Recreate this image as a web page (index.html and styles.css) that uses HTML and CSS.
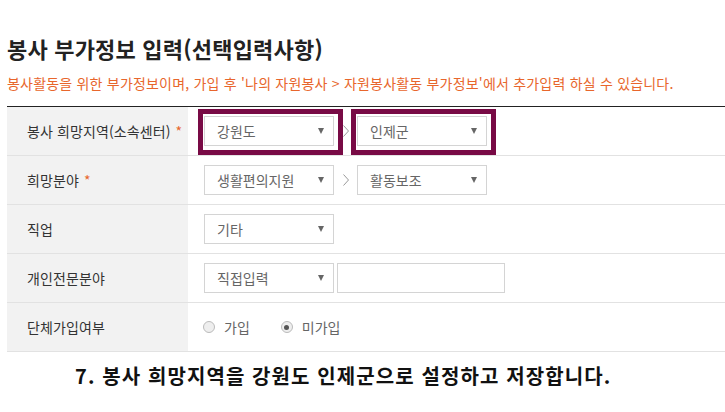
FILE: index.html
```html
<!DOCTYPE html>
<html lang="ko">
<head>
<meta charset="utf-8">
<link rel="stylesheet" href="styles.css">
</head>
<body>
<div class="page">
  <h1 class="title">봉사 부가정보 입력(선택입력사항)</h1>
  <p class="notice">봉사활동을 위한 부가정보이며, 가입 후 '나의 자원봉사 &gt; 자원봉사활동 부가정보'에서 추가입력 하실 수 있습니다.</p>
  <div class="form">
    <div class="row">
      <div class="label">봉사 희망지역(소속센터) <span class="req">*</span></div>
      <div class="field">
        <div class="select"><span class="val">강원도</span><span class="arrow"></span><span class="box"></span></div>
        <span class="sep"><svg width="6" height="12" viewBox="0 0 6 12"><polyline points="0.5,0.5 5.5,6 0.5,11.5" fill="none" stroke="#999" stroke-width="1"/></svg></span>
        <div class="select"><span class="val">인제군</span><span class="arrow"></span><span class="box"></span></div>
      </div>
    </div>
    <div class="row">
      <div class="label">희망분야 <span class="req">*</span></div>
      <div class="field">
        <div class="select"><span class="val">생활편의지원</span><span class="arrow"></span></div>
        <span class="sep"><svg width="6" height="12" viewBox="0 0 6 12"><polyline points="0.5,0.5 5.5,6 0.5,11.5" fill="none" stroke="#999" stroke-width="1"/></svg></span>
        <div class="select"><span class="val">활동보조</span><span class="arrow"></span></div>
      </div>
    </div>
    <div class="row">
      <div class="label">직업</div>
      <div class="field">
        <div class="select"><span class="val">기타</span><span class="arrow"></span></div>
      </div>
    </div>
    <div class="row">
      <div class="label">개인전문분야</div>
      <div class="field">
        <div class="select"><span class="val">직접입력</span><span class="arrow"></span></div>
        <div class="input"></div>
      </div>
    </div>
    <div class="row">
      <div class="label">단체가입여부</div>
      <div class="field radios">
        <label class="radio"><span class="dot"></span>가입</label>
        <label class="radio"><span class="dot on"></span>미가입</label>
      </div>
    </div>
  </div>
  <p class="caption">7. 봉사 희망지역을 강원도 인제군으로 설정하고 저장합니다.</p>
</div>
</body>
</html>
```
FILE: styles.css
```css
html, body {
  margin: 0;
  padding: 0;
  background: #fff;
}
body {
  font-family: "Noto Sans CJK KR", "Noto Sans", sans-serif;
  width: 725px;
  height: 412px;
  overflow: hidden;
}
.page {
  padding-left: 7px;
}
.title {
  margin: 35px 0 0;
  font-size: 22px;
  line-height: 26px;
  font-weight: 700;
  color: #222;
  letter-spacing: 0.2px;
}
.notice {
  margin: 13px 0 0;
  font-size: 14px;
  line-height: 18px;
  color: #e8662c;
  letter-spacing: 0.2px;
  white-space: nowrap;
}
.form {
  margin-top: 14px;
  border-top: 1px solid #222;
  width: 718px;
}
.row {
  display: flex;
  height: 48px;
  border-bottom: 1px solid #e2e2e2;
}
.label {
  width: 161px;
  padding-left: 20px;
  background: #f2f2f2;
  display: flex;
  align-items: center;
  font-size: 14px;
  color: #333;
  letter-spacing: 0.1px;
  white-space: nowrap;
}
.req {
  color: #e8662c;
  margin-left: 5px;
}
.field {
  display: flex;
  align-items: center;
  padding-left: 16px;
  gap: 3px;
}
.select {
  position: relative;
  width: 130px;
  height: 30px;
  box-sizing: border-box;
  border: 1px solid #d4d4d4;
  background: #fff;
  display: flex;
  align-items: center;
  justify-content: space-between;
  padding: 0 8px 0 12px;
  font-size: 14px;
  color: #666;
}
.arrow {
  width: 0;
  height: 0;
  border-left: 3px solid transparent;
  border-right: 3px solid transparent;
  border-top: 6px solid #666;
  margin-right: 1px;
}
.sep {
  width: 17px;
  display: flex;
  justify-content: center;
  align-items: center;
}
.box {
  position: absolute;
  left: -7px;
  right: -10px;
  top: -8px;
  bottom: -10px;
  border: 5px solid #780a45;
}
.input {
  width: 168px;
  height: 30px;
  box-sizing: border-box;
  border: 1px solid #d4d4d4;
}
.radios {
  gap: 31px;
  padding-left: 15px;
}
.radio {
  display: flex;
  align-items: center;
  font-size: 14px;
  color: #666;
}
.dot {
  width: 10px;
  height: 10px;
  border: 1px solid #bbb;
  border-radius: 50%;
  background: #eee;
  margin-right: 9px;
  position: relative;
}
.dot.on::after {
  content: "";
  position: absolute;
  left: 2.5px;
  top: 2.5px;
  width: 5px;
  height: 5px;
  border-radius: 50%;
  background: #555;
}
.caption {
  margin: 12px 0 0 68px;
  font-size: 20px;
  line-height: 24px;
  font-weight: 700;
  color: #111;
  letter-spacing: 1.1px;
  white-space: nowrap;
}
```
